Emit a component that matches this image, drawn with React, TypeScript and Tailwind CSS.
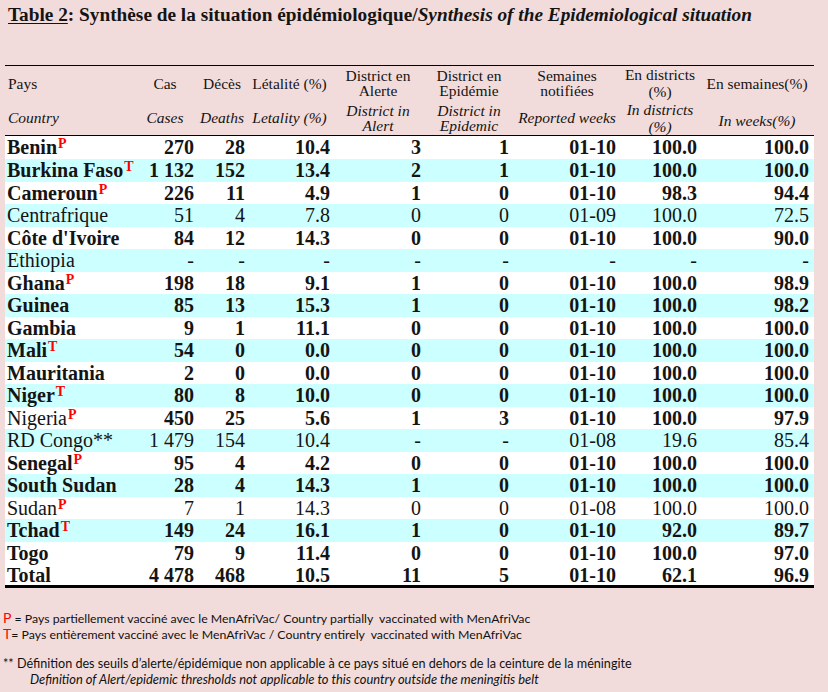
import React from "react";

type Row = {
  name: string;
  sup?: string;
  nameBold: boolean;
  numBold: boolean;
  vals: string[];
  cyan: boolean;
};

const N = "\u00a0";

const rows: Row[] = [
  { name: "Benin", sup: "P", nameBold: true, numBold: true, vals: ["270", "28", "10.4", "3", "1", "01-10", "100.0", "100.0"], cyan: false },
  { name: "Burkina Faso", sup: "T", nameBold: true, numBold: true, vals: [`1${N}132`, "152", "13.4", "2", "1", "01-10", "100.0", "100.0"], cyan: true },
  { name: "Cameroun", sup: "P", nameBold: true, numBold: true, vals: ["226", "11", "4.9", "1", "0", "01-10", "98.3", "94.4"], cyan: false },
  { name: "Centrafrique", nameBold: false, numBold: false, vals: ["51", "4", "7.8", "0", "0", "01-09", "100.0", "72.5"], cyan: true },
  { name: "Côte d'Ivoire", nameBold: true, numBold: true, vals: ["84", "12", "14.3", "0", "0", "01-10", "100.0", "90.0"], cyan: false },
  { name: "Ethiopia", nameBold: false, numBold: false, vals: ["-", "-", "-", "-", "-", "-", "-", "-"], cyan: true },
  { name: "Ghana", sup: "P", nameBold: true, numBold: true, vals: ["198", "18", "9.1", "1", "0", "01-10", "100.0", "98.9"], cyan: false },
  { name: "Guinea", nameBold: true, numBold: true, vals: ["85", "13", "15.3", "1", "0", "01-10", "100.0", "98.2"], cyan: true },
  { name: "Gambia", nameBold: true, numBold: true, vals: ["9", "1", "11.1", "0", "0", "01-10", "100.0", "100.0"], cyan: false },
  { name: "Mali", sup: "T", nameBold: true, numBold: true, vals: ["54", "0", "0.0", "0", "0", "01-10", "100.0", "100.0"], cyan: true },
  { name: "Mauritania", nameBold: true, numBold: true, vals: ["2", "0", "0.0", "0", "0", "01-10", "100.0", "100.0"], cyan: false },
  { name: "Niger", sup: "T", nameBold: true, numBold: true, vals: ["80", "8", "10.0", "0", "0", "01-10", "100.0", "100.0"], cyan: true },
  { name: "Nigeria", sup: "P", nameBold: false, numBold: true, vals: ["450", "25", "5.6", "1", "3", "01-10", "100.0", "97.9"], cyan: false },
  { name: "RD Congo**", nameBold: false, numBold: false, vals: [`1${N}479`, "154", "10.4", "-", "-", "01-08", "19.6", "85.4"], cyan: true },
  { name: "Senegal", sup: "P", nameBold: true, numBold: true, vals: ["95", "4", "4.2", "0", "0", "01-10", "100.0", "100.0"], cyan: false },
  { name: "South Sudan", nameBold: true, numBold: true, vals: ["28", "4", "14.3", "1", "0", "01-10", "100.0", "100.0"], cyan: true },
  { name: "Sudan", sup: "P", nameBold: false, numBold: false, vals: ["7", "1", "14.3", "0", "0", "01-08", "100.0", "100.0"], cyan: false },
  { name: "Tchad", sup: "T", nameBold: true, numBold: true, vals: ["149", "24", "16.1", "1", "0", "01-10", "92.0", "89.7"], cyan: true },
  { name: "Togo", nameBold: true, numBold: true, vals: ["79", "9", "11.4", "0", "0", "01-10", "100.0", "97.0"], cyan: false },
];

const total: Row = { name: "Total", nameBold: true, numBold: true, vals: [`4${N}478`, "468", "10.5", "11", "5", "01-10", "62.1", "96.9"], cyan: false };

const valPad = ["pr-[3px]", "pr-[2px]", "pr-[2px]", "pr-[3px]", "pr-[5px]", "pr-[4px]", "pr-[3px]", "pr-[5px]"];

function BodyRow({ r, last, first }: { r: Row; last?: boolean; first?: boolean }) {
  const h = first ? "h-[24px]" : "h-[22.5px]";
  return (
    <tr className={`${h} ${r.cyan ? "bg-[#ccffff]" : "bg-white"} ${last ? "border-b-[3px] border-black" : ""}`}>
      <td className={`${h} pl-[2px] whitespace-nowrap p-0 ${r.nameBold ? "font-bold" : "font-normal"}`}>
        {r.name}
        {r.sup && (
          <span className="text-[14px] leading-[0px] font-bold text-[#ff0000] align-[6px] ml-[1px]">{r.sup}</span>
        )}
      </td>
      {r.vals.map((v, i) => (
        <td key={i} className={`${h} p-0 text-right whitespace-nowrap ${valPad[i]} ${r.numBold ? "font-bold" : "font-normal"}`}>
          {v}
        </td>
      ))}
    </tr>
  );
}

export default function App() {
  return (
    <div className="w-[828px] h-[692px] bg-[#f2dcdb] overflow-hidden text-[#141414] font-['Liberation_Serif',serif]">
      <div className="pl-[8px] pt-[3px] text-[19.3px] leading-[24px] font-bold whitespace-nowrap">
        <span className="underline underline-offset-[2px]">Table 2</span>: Synthèse de la situation épidémiologique/
        <span className="italic">Synthesis of the Epidemiological situation</span>
      </div>

      <table className="table-fixed border-collapse w-[809px] ml-[5px] mt-[38px] text-[20px] leading-[20px]">
        <colgroup>
          <col className="w-[128px]" />
          <col className="w-[64px]" />
          <col className="w-[50px]" />
          <col className="w-[85px]" />
          <col className="w-[92px]" />
          <col className="w-[90px]" />
          <col className="w-[106px]" />
          <col className="w-[80px]" />
          <col className="w-[114px]" />
        </colgroup>
        <thead className="text-[15.5px] leading-[15px]">
          <tr className="h-[35px] border-t border-black">
            <th className="p-0 pl-[3px] text-left font-normal">Pays</th>
            <th className="p-0 font-normal">Cas</th>
            <th className="p-0 font-normal">Décès</th>
            <th className="p-0 font-normal">Létalité (%)</th>
            <th className="p-0 font-normal">District en<br />Alerte</th>
            <th className="p-0 font-normal">District en<br />Epidémie</th>
            <th className="p-0 font-normal">Semaines<br />notifiées</th>
            <th className="p-0 font-normal leading-[17px]">En districts<br />(%)</th>
            <th className="p-0 font-normal">En semaines(%)</th>
          </tr>
          <tr className="h-[34px] border-b border-black italic">
            <th className="p-0 pl-[3px] text-left font-normal">Country</th>
            <th className="p-0 font-normal">Cases</th>
            <th className="p-0 font-normal">Deaths</th>
            <th className="p-0 font-normal">Letality (%)</th>
            <th className="p-0 font-normal">District in<br />Alert</th>
            <th className="p-0 font-normal">District in<br />Epidemic</th>
            <th className="p-0 font-normal">Reported weeks</th>
            <th className="p-0 font-normal leading-[17px]">In districts<br />(%)</th>
            <th className="p-0 font-normal pt-[6px]">In weeks(%)</th>
          </tr>
        </thead>
        <tbody>
          {rows.map((r, i) => (
            <BodyRow key={r.name} r={r} first={i === 0} />
          ))}
          <BodyRow r={total} last />
        </tbody>
      </table>

      <div className="mt-[22px] pl-[3px] font-['Lato',sans-serif] text-[12.3px] leading-[15px] text-[#111] whitespace-nowrap">
        <div>
          <span className="text-[#ff0000] text-[14px]">P</span> = Pays partiellement vacciné avec le MenAfriVac/ Country partially{N} vaccinated with MenAfriVac
        </div>
        <div>
          <span className="text-[#ff0000] text-[14px]">T</span>= Pays entièrement vacciné avec le MenAfriVac / Country entirely{N} vaccinated with MenAfriVac
        </div>
        <div className="mt-[14px] text-[12.6px]">
          ** Définition des seuils d’alerte/épidémique non applicable à ce pays situé en dehors de la ceinture de la méningite
        </div>
        <div className="pl-[27px] italic leading-[17px] text-[12.9px]">
          Definition of Alert/epidemic thresholds not applicable to this country outside the meningitis belt
        </div>
      </div>
    </div>
  );
}
